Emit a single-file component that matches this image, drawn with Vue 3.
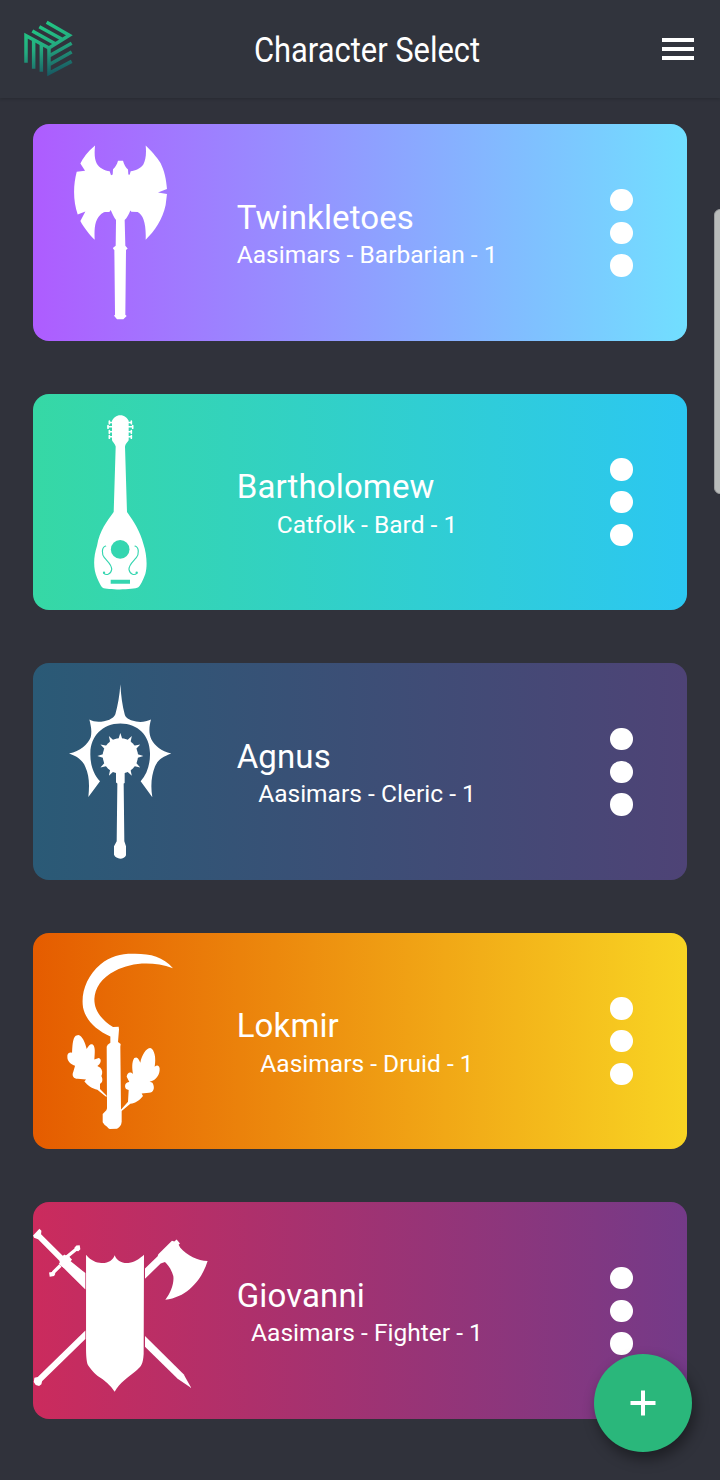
<script setup>
const characters = [
  { name: 'Twinkletoes', info: 'Aasimars - Barbarian - 1', kind: 'barbarian', box: '24 27.5 600 650' },
  { name: 'Bartholomew', info: 'Catfolk - Bard - 1', kind: 'bard', box: '24 11.5 600 650' },
  { name: 'Agnus', info: 'Aasimars - Cleric - 1', kind: 'cleric', box: '24 10 600 650' },
  { name: 'Lokmir', info: 'Aasimars - Druid - 1', kind: 'druid', box: '24 8.5 600 650' },
  { name: 'Giovanni', info: 'Aasimars - Fighter - 1', kind: 'fighter', box: '24 21.5 600 650' },
]
const sunSpikes = Array.from({ length: 12 }, (_, i) => i * 30).filter((a) => a !== 180)
</script>

<template>
  <div class="screen">
    <header class="bar">
      <svg class="logo" viewBox="66 54 156 180">
        <defs>
          <linearGradient id="cube" gradientUnits="userSpaceOnUse" x1="100" y1="60" x2="150" y2="228">
            <stop offset="0" stop-color="#20cf84" />
            <stop offset="0.5" stop-color="#24ac80" />
            <stop offset="1" stop-color="#175762" />
          </linearGradient>
        </defs>
        <g fill="none" stroke="url(#cube)" stroke-width="10.500">
          <path d="M78 188V107L147 144L208 106L140 67M118 80L189 119M97 93L167 132" />
          <path d="M101 118V206M124 132V215M147 145V220L215 184M147 194L215 156M147 168L215 130" />
        </g>
      </svg>
      <h1 class="title"><span>Character Select</span></h1>
      <button class="menu" aria-label="Menu"><i></i><i></i><i></i></button>
    </header>

    <main class="list">
      <article v-for="c in characters" :key="c.name" class="card" :class="c.kind">
        <svg class="emblem" :viewBox="c.box" fill="#fff">
          <g v-if="c.kind === 'barbarian'">
            <path d="M210 92C187 111 173 132 166 146L180 168L155 171C144 213 144 258 158 299L181 290L166 319C177 340 195 362 209 375C208 356 208 337 213 321C220 304 231 294 240 292L253 292L257 286C262 297 267 309 273 316L272 393L265 398L264 402L268 406L270 600L267 603L276 614H295L305 604L301 600L303 406L308 401L301 393L299 316C306 309 312 298 316 287L319 291L338 292C355 301 364 327 362 375C389 350 413 313 422 271L426 238L399 233L426 223C424 192 418 168 407 145C395 126 376 105 362 92C365 118 361 138 355 149C346 161 331 168 317 169L314 180L310 179L309 164C303 160 297 150 294 138H279C276 149 270 159 264 163L263 179L258 181L254 169C239 168 222 159 215 146C208 132 208 115 210 92Z" />
          </g>
          <g v-else-if="c.kind === 'bard'">
            <path d="M286 75C274 75 265 83 261 92V150C262 154 271 161 272 169L266 366C246 393 224 422 216 467C204 504 205 538 216 563C222 577 227 588 233 593C247 600 326 600 340 592C346 588 354 570 361 552C368 528 365 490 355 461C347 427 325 392 306 366L300 169C300 161 309 155 311 150V92C307 83 298 75 286 75Z" />
            <path d="M252 97H264M248 110H264M252 125H264M252 140H264M308 97H320M308 110H324M308 125H320M308 140H320" stroke="#fff" stroke-width="4.500" />
            <path d="M253 93V101M249 106V114M253 121V129M253 136V144M319 93V101M323 106V114M319 121V129M319 136V144" stroke="#fff" stroke-width="5" stroke-linecap="round" />
            <g class="inlay">
              <circle cx="285.500" cy="478" r="28" />
              <path d="M257 569H315V581H257Z" />
              <path class="scroll" d="M242 468C229 472 230 493 238 503C247 514 261 523 260 539C257 554 243 557 236 549M330 468C343 472 342 493 334 503C325 514 311 523 312 539C315 554 329 557 336 549" />
              <circle cx="237" cy="548" r="3.500" /><circle cx="335" cy="548" r="3.500" />
            </g>
          </g>
          <g v-else-if="c.kind === 'cleric'">
            <path d="M286 74C284 108 278 138 271 164C265 176 253 182 237 185C220 188 206 187 193 180C198 201 201 215 197 233C188 255 166 274 132 282C157 290 174 304 181 322C192 346 194 372 190 412L225 365C203 342 195 310 196 280C197 231 232 192 286 192C340 192 374 229 375 280C376 311 367 343 347 365L382 413C376 377 380 347 390 321C397 303 412 292 439 282C408 275 390 259 379 239C371 221 372 202 378 180C359 189 339 189 321 183C308 178 302 174 299 164C292 138 288 108 286 74Z" />
            <circle cx="286" cy="289" r="53" />
            <path v-for="a in sunSpikes" :key="a" d="M286 220L280 239H292Z" :transform="`rotate(${a} 286 289)`" />
            <path d="M273 334H299V370L296 372L298 545L303 560V587C298 601 273 601 267 586V560L275 545L277 372L273 369Z" />
          </g>
          <g v-else-if="c.kind === 'druid'">
            <path d="M444 114C379 92 317 98 271 122C228 144 210 174 208 207C208 241 226 266 264 291L281 290L282 298L279 336L287 342L286 350L288 537L290 542V575C289 586 284 592 276 596L254 597C248 595 246 588 239 585L233 577V552L244 541L246 535L245 350L248 344L256 338V319C213 300 182 270 174 232C167 187 186 137 226 103C257 78 286 71 323 71C374 70 413 79 444 114Z" />
            <path d="M152 317C142 325 142 353 141 368C130 364 126 372 127 382C127 394 139 403 150 407L145 424C139 437 146 446 158 446L183 448L178 454C187 465 202 476 217 479L244 501L245 497L225 477V461C233 459 234 447 229 438C233 430 233 420 226 413L217 408C228 402 231 386 221 384L208 388C209 370 212 350 203 343C194 340 189 350 185 357C181 339 171 316 160 315Z" />
            <path d="M376 354C364 354 350 375 346 398C340 386 338 379 328 384C320 395 321 415 324 432C315 423 306 429 305 440L313 456C301 456 297 468 303 477L311 480L309 515L287 540L289 544L316 521C331 521 344 510 354 498L350 490L372 488C386 488 390 474 384 461C383 456 375 457 374 455C394 450 405 433 404 415C402 405 396 404 389 410C394 386 389 358 376 354Z" />
          </g>
          <g v-else>
            <path d="M24 122L43 102L49 108L48 118L113 183L119 179L124 189L181 235V284L116 220L106 211L103 198L39 133L27 129Z" />
            <path d="M84 234L106 212M123 188L156 161" stroke="#fff" stroke-width="10" />
            <path d="M72 233L84 231L91 237L87 244L74 246ZM148 159L154 152L164 151L166 163L160 169L151 168ZM120 181L129 181L141 195L116 219L101 208Z" />
            <path d="M181 407L38 547L28 549L26 562L32 571L42 574L49 569L51 560L181 433Z" />
            <path d="M360 221L398 184L400 178L441 138L448 140L455 134L465 146L461 150L466 159C486 182 519 198 548 199C533 247 493 307 421 315C438 295 448 264 445 244C439 224 430 211 420 202L407 206L360 252Z" />
            <path d="M360 424L476 539L499 580L458 552L360 456Z" />
            <path d="M183 180C193 192 207 203 224 204C248 207 263 197 269 181C275 197 291 207 314 204C333 201 347 189 357 180L356 478C354 509 349 514 336 526C309 549 284 564 269 591C256 571 239 557 218 544C205 533 190 515 187 507C183 492 183 470 183 457Z" />
          </g>
        </svg>
        <div class="copy">
          <h2>{{ c.name }}</h2>
          <p>{{ c.info }}</p>
        </div>
        <button class="dots" aria-label="Options"><i></i><i></i><i></i></button>
      </article>
    </main>

    <div class="scroll-thumb"></div>
    <button class="fab" aria-label="Add character">
      <svg viewBox="0 0 26 26"><path d="M13 .5V25.500M.5 13H25.500" stroke="#fff" stroke-width="4" /></svg>
    </button>
  </div>
</template>

<style>
body { background: #30323b; }
</style>

<style scoped>
.screen {
  position: relative;
  box-sizing: border-box;
  width: 720px;
  height: 1480px;
  overflow: hidden;
  background: #30323b;
  color: #fff;
  font-family: Roboto, "Liberation Sans", sans-serif;
}
button { border: 0; padding: 0; background: none; }
.bar {
  box-sizing: border-box;
  height: 98px;
  display: grid;
  grid-template-columns: 52px 1fr 32px;
  align-items: center;
  padding: 0 26px 0 22px;
  background: #31343d;
  box-shadow: 0 1px 3px rgba(20, 22, 28, 0.3);
}
.logo { width: 52px; height: 60px; margin-top: -2px; }
.title {
  margin: 0;
  padding: 2px 2px 0 0;
  font-size: 35.500px;
  line-height: 44px;
  font-weight: 400;
  text-align: center;
  white-space: nowrap;
}
.title span { display: inline-block; transform: scaleX(0.87); }
.menu { display: flex; flex-direction: column; gap: 5px; width: 32px; }
.menu i { height: 4px; background: #fff; }
.list {
  display: flex;
  flex-direction: column;
  gap: 53px;
  padding: 26.400px 32.700px 0 33px;
}
.card {
  display: grid;
  grid-template-columns: 200px 268px 1fr;
  height: 216.500px;
  border-radius: 16px;
  overflow: hidden;
}
.barbarian { background: linear-gradient(90deg, #ae5cff, #71dfff); }
.bard { background: linear-gradient(90deg, #36d8a5, #2cc7f1); }
.cleric { background: linear-gradient(90deg, #2a5a76, #4e4376); }
.druid { background: linear-gradient(90deg, #e55c00, #f8d423); }
.fighter { background: linear-gradient(90deg, #cb2b5d, #743a88); }
.emblem { width: 200px; height: 216.500px; }
.inlay { fill: #34d6b0; }
.scroll { fill: none; stroke: #34d6b0; stroke-width: 3.500; stroke-linecap: round; }
.copy { padding: 73.600px 0 0 3.700px; white-space: nowrap; }
h2 { margin: 0; font-size: 33px; line-height: 40px; font-weight: 400; letter-spacing: 0.130px; }
p { margin: 2.400px 0 0; width: 260.600px; font-size: 24.500px; line-height: 30px; text-align: center; letter-spacing: 0.020px; }
.dots {
  justify-self: end;
  display: flex;
  flex-direction: column;
  gap: 10.400px;
  width: 22.400px;
  margin: 64.400px 54.800px 0 0;
}
.dots i { height: 22.400px; border-radius: 50%; background: #fff; }
.scroll-thumb {
  position: absolute;
  top: 209px;
  right: -6px;
  width: 12.500px;
  height: 285px;
  box-sizing: border-box;
  border: 1px solid #9a9c9e;
  border-radius: 6px;
  background: #b9bcbb;
}
.fab {
  position: absolute;
  left: 594px;
  top: 1354px;
  width: 98px;
  height: 98px;
  border-radius: 50%;
  display: grid;
  place-items: center;
  background: #2ab77b;
  box-shadow: 3px 7px 14px rgba(0, 0, 0, 0.4);
}
.fab svg { width: 26px; height: 26px; }
</style>
